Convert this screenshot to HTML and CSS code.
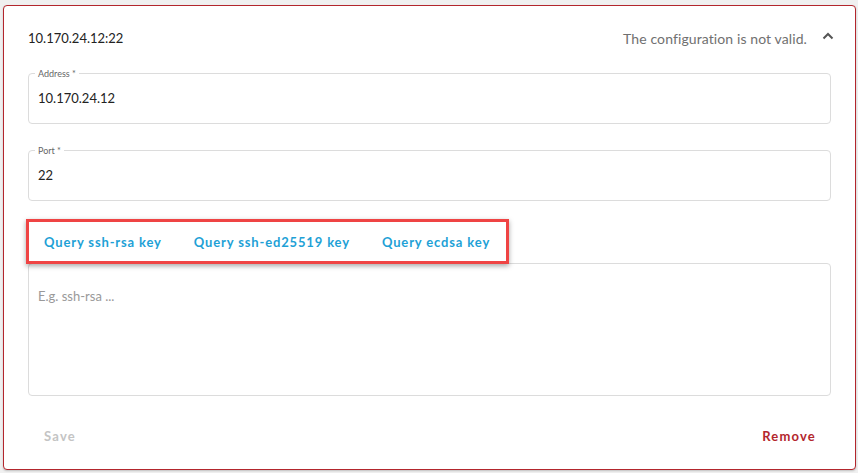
FILE: index.html
```html
<!DOCTYPE html>
<html>
<head>
<meta charset="utf-8">
<link rel="stylesheet" href="styles.css">
</head>
<body>
<div class="card">
  <div class="header">
    <div class="title">10.170.24.12:22</div>
    <div class="status">The configuration is not valid.</div>
    <svg class="chevron" width="12" height="8" viewBox="0 0 12 8"><path d="M1.5 6.5 L6 2 L10.5 6.5" fill="none" stroke="#555" stroke-width="2"/></svg>
  </div>
  <div class="field">
    <span class="label">Address *</span>
    <div class="value">10.170.24.12</div>
  </div>
  <div class="field">
    <span class="label">Port *</span>
    <div class="value">22</div>
  </div>
  <div class="query-row">
    <button class="link">Query ssh-rsa key</button>
    <button class="link">Query ssh-ed25519 key</button>
    <button class="link">Query ecdsa key</button>
  </div>
  <div class="textarea">E.g. ssh-rsa ...</div>
  <div class="footer">
    <button class="action save">Save</button>
    <button class="action remove">Remove</button>
  </div>
</div>
</body>
</html>
```
FILE: styles.css
```css
html, body { margin: 0; padding: 0; }
body {
  background: #f0f0f0;
  font-family: Lato, "Liberation Sans", sans-serif;
  width: 858px;
  height: 473px;
  padding: 5px 2px 0 3px;
  box-sizing: border-box;
}
.card {
  background: #fff;
  border: 1px solid #b3262d;
  border-radius: 4px;
  height: 465px;
  box-sizing: border-box;
  padding: 0 24px 0 24px;
  box-shadow: 0 1px 2px rgba(0,0,0,0.2);
  display: flex;
  flex-direction: column;
}
.header {
  display: flex;
  align-items: center;
  height: 67px;
  padding-bottom: 3px;
  box-sizing: border-box;
}
.title { font-size: 13px; color: #222; flex: 1; }
.status { font-size: 14px; color: #707070; margin-right: 15px; letter-spacing: 0.1px; }
.chevron { margin-right: -3px; margin-top: -4px; }
.field {
  position: relative;
  border: 1px solid #dcdcdc;
  border-radius: 4px;
  height: 51px;
  box-sizing: border-box;
  padding: 16px 9px 0;
  margin-bottom: 26px;
}
.label {
  position: absolute;
  top: -6px;
  left: 6px;
  padding: 0 3px;
  background: #fff;
  font-size: 9px;
  color: #666;
  line-height: 11px;
}
.value { font-size: 13px; color: #222; }
.query-row {
  align-self: flex-start;
  margin-left: -2px;
  margin-top: -8px;
  height: 45px;
  box-sizing: border-box;
  border: 3px solid #ef4444;
  box-shadow: 0 2px 5px rgba(0,0,0,0.35);
  display: flex;
  align-items: center;
  padding: 0 16px 0 15px;
  gap: 32px;
  position: relative;
  z-index: 1;
  background: #fff;
}
.link {
  border: 0;
  background: none;
  padding: 0;
  font-family: inherit;
  font-weight: 700;
  font-size: 13px;
  letter-spacing: 0.85px;
  color: #1ea1d6;
}
.textarea {
  border: 1px solid #dcdcdc;
  border-radius: 4px;
  height: 133px;
  box-sizing: border-box;
  padding: 24px 9px;
  font-size: 13px;
  color: #999;
  margin-top: -1px;
}
.footer {
  display: flex;
  justify-content: space-between;
  padding: 0 15px 0 16px;
  margin-top: 32px;
}
.action {
  border: 0;
  background: none;
  padding: 0;
  font-family: inherit;
  font-weight: 700;
  font-size: 13px;
  letter-spacing: 1.2px;
}
.save { color: #c4c4c4; }
.remove { color: #b3262d; }
```
